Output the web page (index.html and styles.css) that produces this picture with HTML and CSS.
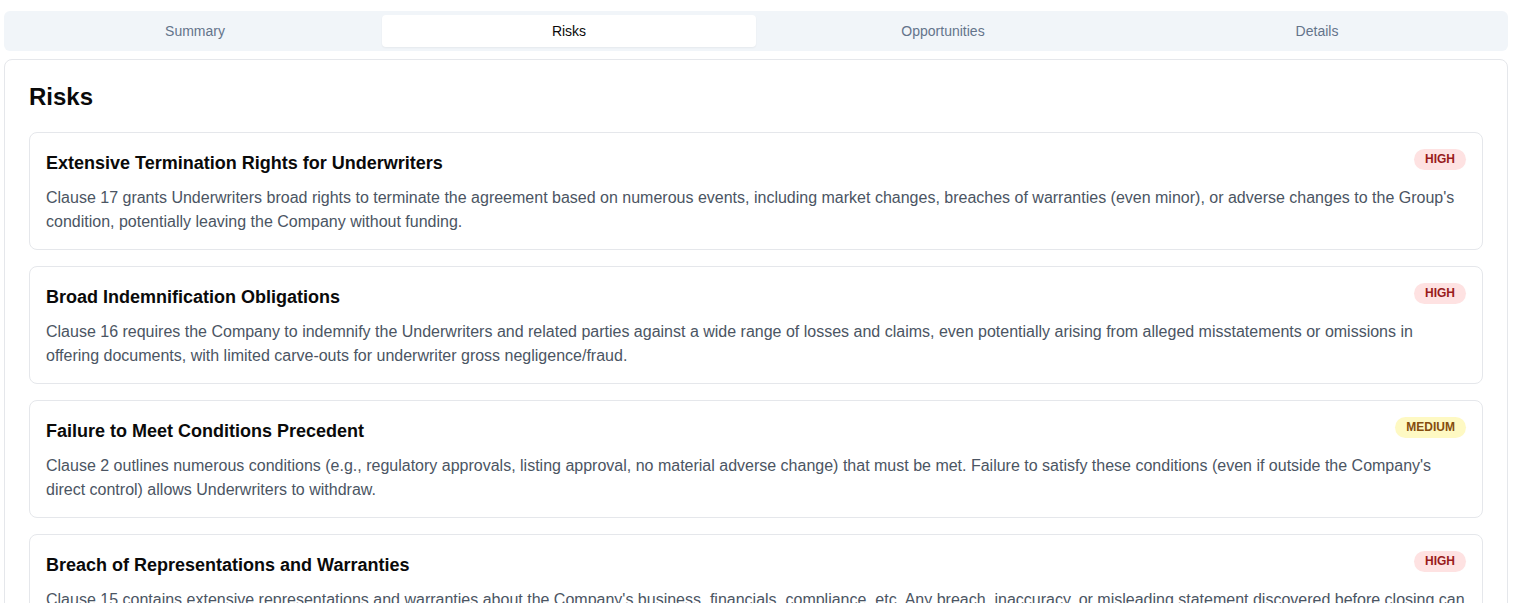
FILE: index.html
```html
<!DOCTYPE html>
<html lang="en">
<head>
<meta charset="utf-8">
<title>Risks</title>
<link rel="stylesheet" href="styles.css">
</head>
<body>
<div class="page">
  <div class="tabs">
    <div class="tab">Summary</div>
    <div class="tab active">Risks</div>
    <div class="tab">Opportunities</div>
    <div class="tab">Details</div>
  </div>
  <section class="card">
    <h2 class="card-title">Risks</h2>
    <div class="list">
      <div class="item">
        <div class="item-head">
          <h3 class="item-title">Extensive Termination Rights for Underwriters</h3>
          <span class="badge high">HIGH</span>
        </div>
        <p class="item-desc">Clause 17 grants Underwriters broad rights to terminate the agreement based on numerous events, including market changes, breaches of warranties (even minor), or adverse changes to the Group's condition, potentially leaving the Company without funding.</p>
      </div>
      <div class="item">
        <div class="item-head">
          <h3 class="item-title">Broad Indemnification Obligations</h3>
          <span class="badge high">HIGH</span>
        </div>
        <p class="item-desc">Clause 16 requires the Company to indemnify the Underwriters and related parties against a wide range of losses and claims, even potentially arising from alleged misstatements or omissions in offering documents, with limited carve-outs for underwriter gross negligence/fraud.</p>
      </div>
      <div class="item">
        <div class="item-head">
          <h3 class="item-title">Failure to Meet Conditions Precedent</h3>
          <span class="badge medium">MEDIUM</span>
        </div>
        <p class="item-desc">Clause 2 outlines numerous conditions (e.g., regulatory approvals, listing approval, no material adverse change) that must be met. Failure to satisfy these conditions (even if outside the Company's direct control) allows Underwriters to withdraw.</p>
      </div>
      <div class="item">
        <div class="item-head">
          <h3 class="item-title">Breach of Representations and Warranties</h3>
          <span class="badge high">HIGH</span>
        </div>
        <p class="item-desc">Clause 15 contains extensive representations and warranties about the Company's business, financials, compliance, etc. Any breach, inaccuracy, or misleading statement discovered before closing can allow Underwriters to terminate the agreement and may expose the Company to indemnity claims.</p>
      </div>
    </div>
  </section>
</div>
</body>
</html>
```

FILE: styles.css
```css
* { box-sizing: border-box; }
html, body { margin: 0; padding: 0; background: #ffffff; }
body {
  font-family: "Liberation Sans", Arial, sans-serif;
  color: #0a0a0a;
}
.page {
  padding: 11px 11px 0 4px;
  display: flex;
  flex-direction: column;
  gap: 8px;
}
.tabs {
  display: grid;
  grid-template-columns: repeat(4, 1fr);
  height: 40px;
  padding: 4px;
  background: #f1f5f9;
  border-radius: 6px;
}
.tab {
  display: flex;
  align-items: center;
  justify-content: center;
  font-size: 14px;
  color: #64748b;
  border-radius: 4px;
}
.tab.active {
  background: #ffffff;
  color: #0a0a0a;
  box-shadow: 0 1px 2px rgba(0,0,0,0.05);
}
.card {
  border: 1px solid #e5e7eb;
  border-radius: 8px;
  padding: 21px 24px 24px;
  background: #fff;
}
.card-title {
  margin: 0 0 19px;
  font-size: 24px;
  line-height: 32px;
  font-weight: 700;
}
.list {
  display: flex;
  flex-direction: column;
  gap: 16px;
}
.item {
  border: 1px solid #e5e7eb;
  border-radius: 8px;
  padding: 16px 16px 15px;
}
.item-head {
  display: flex;
  justify-content: space-between;
  align-items: flex-start;
  margin-bottom: 9px;
}
.item-title {
  margin: 0;
  font-size: 18px;
  line-height: 28px;
  font-weight: 700;
  color: #0a0a0a;
}
.badge {
  font-size: 12px;
  line-height: 17px;
  font-weight: 700;
  padding: 2px 11px;
  border-radius: 9999px;
}
.badge.high { background: #fee2e2; color: #991b1b; }
.badge.medium { background: #fef9c3; color: #854d0e; }
.item-desc {
  margin: 0;
  font-size: 16px;
  line-height: 24px;
  color: #4b5563;
}
```
